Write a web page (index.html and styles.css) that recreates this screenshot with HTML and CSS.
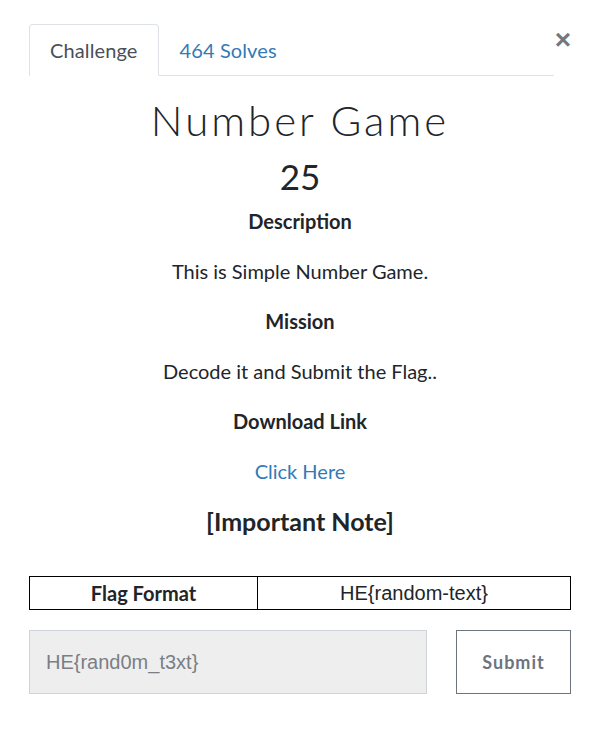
FILE: index.html
```html
<!DOCTYPE html>
<html>
<head>
<meta charset="utf-8">
<link rel="stylesheet" href="styles.css">
</head>
<body>
<div class="modal">
  <div class="header">
    <ul class="tabs">
      <li class="tab active">Challenge</li>
      <li class="tab link">464 Solves</li>
    </ul>
    <button class="close">&times;</button>
  </div>
  <h3 class="title">Number Game</h3>
  <h4 class="value">25</h4>
  <div class="desc">
    <p class="b">Description</p>
    <p>This is Simple Number Game.</p>
    <p class="b">Mission</p>
    <p>Decode it and Submit the Flag..</p>
    <p class="b">Download Link</p>
    <p><a class="lnk">Click Here</a></p>
    <h3 class="note">[Important Note]</h3>
  </div>
  <table class="fmt">
    <tr><td class="c1">Flag Format</td><td class="c2">HE{random-text}</td></tr>
  </table>
  <div class="submit-row">
    <input class="flag" placeholder="HE{rand0m_t3xt}">
    <button class="submit">Submit</button>
  </div>
</div>
</body>
</html>
```
FILE: styles.css
```css
html, body { margin: 0; padding: 0; background: #fff; }
body { font-family: Lato, "Open Sans", sans-serif; color: #212529; font-size: 20px; }
.modal { padding: 24px 28px 0 29px; }
.header { display: flex; align-items: flex-start; }
.tabs { list-style: none; margin: 0; padding: 0; display: flex; flex: 0 0 525px; border-bottom: 1px solid #dee2e6; }
.tab { padding: 11px 20px; line-height: 28px; border: 1px solid transparent; border-top-left-radius: 4px; border-top-right-radius: 4px; margin-bottom: -1px; font-size: 20px; letter-spacing: 0.12px; }
.tab.active { color: #495057; border-color: #dee2e6 #dee2e6 #fff; background: #fff; }
.tab.link { color: #337ab7; }
.close { flex: 1; background: none; border: 0; padding: 0; margin-top: 2px; font-family: "Liberation Sans", Arial, sans-serif; font-size: 28px; font-weight: bold; line-height: 28px; color: #777; text-align: right; }
.title { margin: 22px 0 0; text-align: center; font-weight: 300; font-size: 42px; line-height: 44px; letter-spacing: 3px; color: #212529; }
.value { margin: 14px 0 0; text-align: center; font-weight: 400; font-size: 35px; line-height: 40px; }
.desc { text-align: center; margin-top: 11px; }
.desc p { margin: 0 0 22px; line-height: 28px; }
.desc p.b { font-weight: 700; }
.lnk { color: #337ab7; }
.note { margin: -3px 0 0; font-size: 25px; line-height: 34px; font-weight: 700; }
.fmt { margin-top: 38px; width: 100%; border-collapse: collapse; font-size: 20px; }
.fmt td { border: 1px solid #000; height: 32px; padding: 0; text-align: center; }
.c1 { width: 227px; font-weight: 700; }
.c2 { font-family: "Liberation Sans", Arial, sans-serif; }
.submit-row { display: flex; justify-content: space-between; margin-top: 20px; }
.flag { width: 398px; height: 64px; box-sizing: border-box; background: #eee; border: 1px solid #ced4da; padding: 0 16px; font-family: "Liberation Sans", Arial, sans-serif; font-size: 20px; color: #495057; }
.flag::placeholder { color: #7a7f85; }
.submit { width: 115px; height: 64px; box-sizing: border-box; background: #fff; border: 1px solid #6c757d; font-family: Lato, sans-serif; font-weight: 700; font-size: 18px; color: #6c757d; letter-spacing: 1px; }
```
